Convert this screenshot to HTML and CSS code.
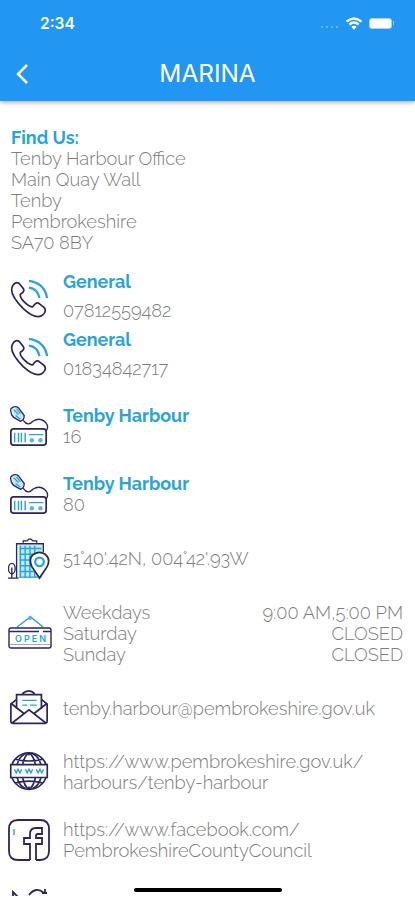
FILE: index.html
```html
<!DOCTYPE html>
<html lang="en">
<head>
  <meta charset="UTF-8" />
  <meta name="viewport" content="width=device-width, initial-scale=1.0" />
  <title>Marina</title>
  <link rel="stylesheet" href="styles.css">
</head>
<body>
  <!-- Shared icons -->
  <svg class="sprite" xmlns="http://www.w3.org/2000/svg">
    <symbol id="phone" viewBox="0 0 44 44">
      <path class="navy" d="M5 7 Q8 2 12 5 L16 10 Q18 13 13 16 Q12 19 17 24 Q23 30 26 29 Q30 23 33 26 L38 30 Q41 34 36 38 Q29 43 16 31 Q0 15 5 7Z"/>
      <path class="blue thick" d="M22 9 Q31 10 33 20 M22 2 Q38 4 41 20"/>
    </symbol>
    <symbol id="radio" viewBox="0 0 44 44">
      <path class="tint" d="M4 4 L11 2 L17 12 L13 17 L6 13Z"/>
      <path class="navy thin" d="M3 4 Q7 0 11 3 L17 11 Q17 16 13 17 L6 13 Q2 9 3 4Z M16 16 Q21 23 26 17 Q34 12 40 19 Q43 23 40 27"/>
      <path class="blue thin" d="M6 5 L11 10 M9 4 L13 9 M8 11 L13 15"/>
      <rect class="navy" x="3" y="25" width="37" height="17" rx="3"/>
      <path class="blue" d="M7 29 V39 M11 29 V39 M14 29 V39 M18 29 V39 M22 31 H37"/>
      <circle class="dot" cx="25" cy="37" r="2.3"/>
      <circle class="dot" cx="34" cy="37" r="2.3"/>
    </symbol>
  </svg>

  <header class="header">
    <div class="status">
      <span class="time">2:34</span>
      <span class="signal"><i></i><i></i><i></i><i></i></span>
      <svg class="wifi" viewBox="0 0 18 13">
        <path d="M1.5 4.7 Q9 -1.8 16.5 4.7 M4.3 7.6 Q9 3.6 13.7 7.6"/>
        <path class="wifi-dot" d="M6.3 9.8 Q9 7.6 11.7 9.8 L9 12.7Z"/>
      </svg>
      <span class="battery"></span>
      <span class="battery-tip"></span>
    </div>
    <div class="title-bar">
      <svg class="back" viewBox="0 0 12 20"><path d="M11 1 L2 10 L11 19"/></svg>
      <h1>MARINA</h1>
    </div>
  </header>

  <main class="content">
    <section class="address">
      <h2>Find Us:</h2>
      <p>Tenby Harbour Office</p>
      <p>Main Quay Wall</p>
      <p>Tenby</p>
      <p>Pembrokeshire</p>
      <p>SA70 8BY</p>
    </section>

    <div class="row phone">
      <svg class="icon"><use href="#phone"/></svg>
      <div class="info">
        <h2>General</h2>
        <p>07812559482</p>
      </div>
    </div>
    <div class="row phone">
      <svg class="icon"><use href="#phone"/></svg>
      <div class="info">
        <h2>General</h2>
        <p>01834842717</p>
      </div>
    </div>

    <div class="row radio first">
      <svg class="icon"><use href="#radio"/></svg>
      <div class="info">
        <h2>Tenby Harbour</h2>
        <p>16</p>
      </div>
    </div>
    <div class="row radio">
      <svg class="icon"><use href="#radio"/></svg>
      <div class="info">
        <h2>Tenby Harbour</h2>
        <p>80</p>
      </div>
    </div>

    <div class="row location">
      <svg class="icon" viewBox="0 0 44 44">
        <path class="tint" d="M11 7 H36 V42 H11Z"/>
        <path class="blue" d="M12 11 H35 M12 17 H35 M12 23 H30 M12 29 H30 M12 35 H32 M12 41 H32 M13 8 V42 M18 8 V42 M23 8 V42 M28 8 V42"/>
        <path class="navy thin" d="M9 42 V6 H37 V15 M16 5 V3 H20 Q23 -1 26 3 H30 V5 M0 42 H11 M4 42 V31"/>
        <ellipse class="navy thin" cx="4" cy="32" rx="3.5" ry="5.5"/>
        <path class="navy pin" d="M33 42 L25 30 Q21 21 27 17 Q33 13 39 17 Q45 22 41 30Z"/>
        <circle class="blue thick" cx="33" cy="25" r="4.5"/>
      </svg>
      <p>51°40'.42N, 004°42'.93W</p>
    </div>

    <div class="row hours">
      <svg class="icon open" viewBox="0 0 44 34">
        <path class="blue" d="M9 11 L21 2 Q22 0 24 2 L35 11"/>
        <circle class="dot" cx="22" cy="2" r="2"/>
        <rect class="navy thin" x="1" y="12" width="42" height="20" rx="2"/>
        <path class="navy thin" d="M1 15.5 H31 M35 15.5 H43"/>
        <path class="lilac" d="M2 28.5 H42"/>
        <text x="22.5" y="25.5" textLength="31">OPEN</text>
      </svg>
      <div class="times">
        <span>Weekdays</span><span>9:00 AM,5:00 PM</span>
        <span>Saturday</span><span class="closed">CLOSED</span>
        <span>Sunday</span><span class="closed">CLOSED</span>
      </div>
    </div>

    <div class="row email">
      <svg class="icon" viewBox="0 0 44 44">
        <path class="navy" d="M9 13 L3 18 V36 Q3 38 5 38 H39 Q41 38 41 36 V18 L35 13"/>
        <path class="navy" d="M9 23 V8 H35 V23 M15 7 Q22 1 28 7 M3 17 L17 28 M41 17 L27 28 M4 38 L22 24 L40 38"/>
        <path class="blue" d="M15 14 H30 M15 19 H20 M23 19 H30"/>
      </svg>
      <p>tenby.harbour@pembrokeshire.gov.uk</p>
    </div>

    <div class="row web">
      <svg class="icon" viewBox="-1 0 46 46">
        <circle class="navy" cx="22" cy="22" r="20"/>
        <path class="navy" d="M22 2 V5 M22 39 V42 M15 15 Q17 5 22 2 Q27 5 29 15 M15 29 Q17 39 22 42 Q27 39 29 29 M9 15 Q11 6 18 3 M35 15 Q33 6 26 3 M9 29 Q11 38 18 41 M35 29 Q33 38 26 41 M7 9 Q22 13 37 9 M7 35 Q22 31 37 35"/>
        <rect class="band" x="1" y="15" width="42" height="14"/>
        <path class="navy" d="M2 29 V15 H42 V29 Z"/>
        <path class="blue" d="M6 20 L8 24 L10 20 L12 24 L14 20 M18 20 L20 24 L22 20 L24 24 L26 20 M30 20 L32 24 L34 20 L36 24 L38 20"/>
      </svg>
      <p>https://www.pembrokeshire.gov.uk/<br>harbours/tenby-harbour</p>
    </div>

    <div class="row facebook">
      <svg class="icon" viewBox="0 0 42 42">
        <path class="navy" d="M22 41 H10 Q1 41 1 32 V10 Q1 1 10 1 H32 Q41 1 41 10 V32 Q41 41 32 41 H28"/>
        <path class="navy" d="M22 41 V25 H16 V19 H22 V15 Q22 9 28 9 H34 V15 H30 Q28 15 28 17 V19 H34 V25 H28 V41"/>
        <path class="blue thin" d="M6 10 V16"/>
      </svg>
      <p>https://www.facebook.com/<br>PembrokeshireCountyCouncil</p>
    </div>

    <div class="row next">
      <svg class="icon" viewBox="0 0 42 42">
        <path class="navy" d="M5 10 V3 L11 9 M21 6 Q28 -3 36 4 M34 4 H39 M37 0 V5"/>
      </svg>
    </div>
  </main>
  <div class="home-bar"></div>
</body>
</html>
```
FILE: styles.css
```css
* {
  box-sizing: border-box;
}

body {
  margin: 0;
  height: 900px;
  overflow: hidden;
  background: #fff;
  color: #7c7c7c;
  font-family: Raleway, Lato, sans-serif;
  font-size: 18.25px;
  font-weight: 300;
  line-height: 21px;
}

h1, h2, p {
  margin: 0;
}

h2 {
  color: #28a4dc;
  font-size: 17.9px;
  font-weight: 700;
  line-height: 21px;
}

.sprite {
  display: none;
}

.header {
  height: 101px;
  background: #2196f3;
  color: #fff;
  box-shadow: 0 1px 5px rgba(0, 0, 0, 0.4);
}

.status {
  display: flex;
  align-items: center;
  height: 46px;
  padding: 0 21px 0 40px;
}

.time {
  flex: 1;
  font-family: Inter, sans-serif;
  font-size: 15.5px;
  font-weight: 600;
}

.signal {
  display: flex;
  gap: 3px;
  margin: 8px 7px 0 0;
}

.signal i {
  width: 2px;
  height: 2px;
  background: #62b4f6;
}

.wifi {
  width: 18px;
  height: 13px;
  margin-right: 6px;
  fill: none;
  stroke: #fff;
  stroke-width: 2.4;
}

.wifi-dot {
  fill: #fff;
  stroke: none;
}

.battery {
  width: 23px;
  height: 11px;
  border: 1px solid #a6d5fa;
  border-radius: 3px;
  background: #fff;
}

.battery-tip {
  width: 1px;
  height: 4px;
  margin-left: 1px;
  background: #8fcaf9;
}

.title-bar {
  display: grid;
  grid-template-columns: 32px 1fr 32px;
  align-items: center;
  height: 55px;
}

.back {
  width: 12px;
  height: 20px;
  margin-left: 16px;
  fill: none;
  stroke: #fff;
  stroke-width: 2.5;
}

h1 {
  font-family: Inter, sans-serif;
  font-size: 24.4px;
  font-weight: 400;
  text-align: center;
}

.content {
  height: 795px;
  padding-top: 26px;
  overflow: hidden;
}

.address {
  height: 144px;
  padding-left: 11px;
}

.row {
  display: flex;
  align-items: center;
  padding: 0 12px 0 8px;
}

.row > :last-child {
  flex: 1;
  white-space: nowrap;
}

.icon {
  flex: none;
  width: 42px;
  height: 42px;
  margin-right: 13px;
  fill: none;
}

.phone {
  height: 58px;
}

.phone .info {
  padding-bottom: 9px;
}

.phone h2 {
  margin-bottom: 8px;
}

.radio {
  height: 68px;
}

.radio .info {
  padding-bottom: 1px;
}

.first {
  margin-top: 5px;
}

.location {
  height: 61px;
}

.hours {
  height: 88px;
}

.open {
  width: 44px;
  height: 34px;
  margin-right: 11px;
}

.open text {
  fill: #28a4dc;
  font-family: Inter, sans-serif;
  font-size: 9px;
  font-weight: 600;
  text-anchor: middle;
}

.times {
  display: grid;
  grid-template-columns: 1fr auto;
}

.closed {
  text-align: right;
}

.email {
  height: 62px;
}

.web {
  height: 66px;
}

.facebook {
  height: 70px;
}

.row.next {
  height: 70px;
  padding-top: 14px;
  align-items: flex-start;
}

.row.next .icon {
  flex: none;
}

.home-bar {
  position: absolute;
  top: 888px;
  left: 134px;
  width: 148px;
  height: 4px;
  border-radius: 2px;
  background: #000;
}

/* icon strokes */
.navy {
  stroke: #2b2560;
  stroke-width: 1.8;
}

.blue {
  stroke: #28a4dc;
  stroke-width: 1.5;
}

.lilac {
  stroke: #aaa6c6;
}

.navy.thin, .blue.thin {
  stroke-width: 1.4;
}

.blue.thick {
  stroke-width: 2.4;
}

.tint {
  fill: #c5e9f9;
}

.dot {
  fill: #58b8e3;
}

.pin, .band {
  fill: #fff;
}
```
